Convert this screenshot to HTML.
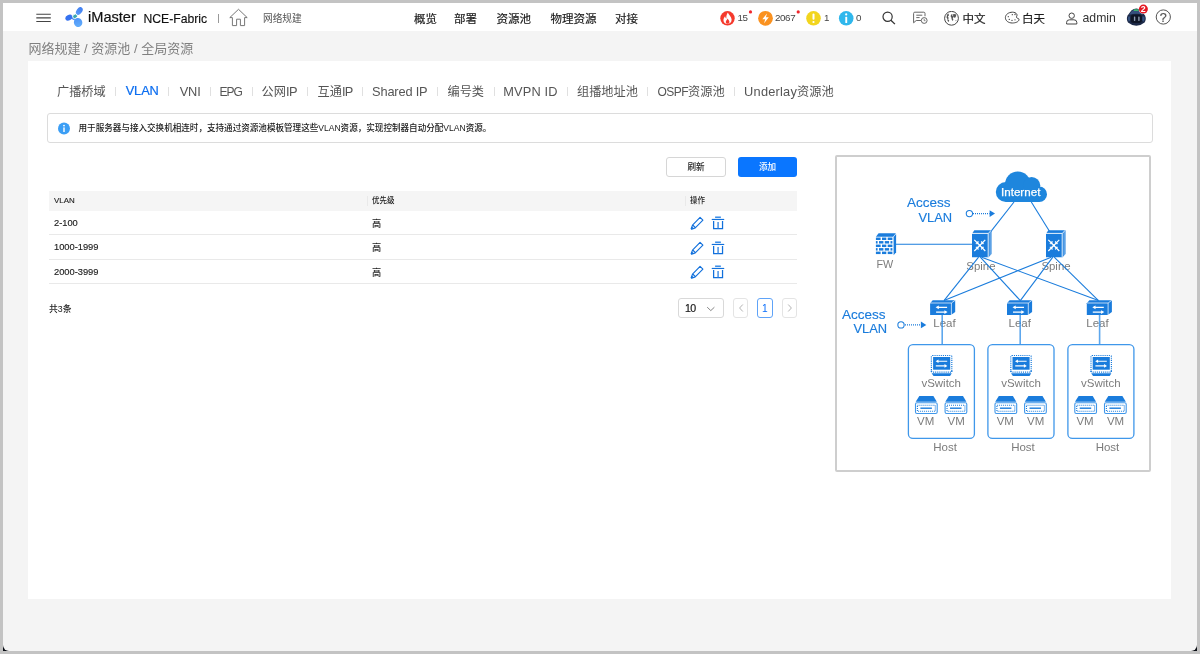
<!DOCTYPE html>
<html lang="zh-CN">
<head>
<meta charset="utf-8">
<title>iMaster NCE-Fabric</title>
<style>
*{box-sizing:border-box;margin:0;padding:0}
html,body{width:1200px;height:654px;overflow:hidden;background:#c3c3c3}
body{will-change:transform;font-family:"Liberation Sans","Noto Sans CJK SC",sans-serif;color:#222;position:relative}
.abs{position:absolute;white-space:nowrap;line-height:1}
#cornerL,#cornerR{position:absolute;width:6px;height:6px;background:#0a0d14;top:645px}
#cornerL{left:3px}#cornerR{left:1191px}
#frame2{position:absolute;left:3px;top:3px;width:1194px;height:648px;background:#f4f4f4;border-radius:0 0 6px 6px}
#hdr{position:absolute;left:3px;top:3px;width:1194px;height:28px;background:#fff}
#panel{position:absolute;left:28px;top:61px;width:1143px;height:538px;background:#fff}
.nav{font-size:11.5px;color:#1c1c1c;top:13.8px;-webkit-text-stroke:.18px #1c1c1c}
.tab{font-size:12.2px;color:#555;top:86px}
.tab .l{font-size:12.8px}
.sep{position:absolute;width:1px;background:#e0e0e0;top:86.5px;height:9.5px}
.cnt{font-size:9.8px;color:#444;top:13.1px;letter-spacing:-.4px}
</style>
</head>
<body>
<div id="cornerL"></div><div id="cornerR"></div>
<div id="frame2"></div>
<div id="hdr"></div>
<!-- hamburger -->
<svg class="abs" style="left:36px;top:13px" width="16" height="10" viewBox="0 0 16 10"><path d="M0.3 1.3H14.8M0.3 4.9H14.8M0.3 8.5H14.8" stroke="#444" stroke-width="1.1" fill="none"/></svg>
<!-- logo -->
<svg class="abs" style="left:65px;top:7px" width="19" height="20" viewBox="0 0 19 20">
<defs><linearGradient id="lg1" x1="0" y1="0" x2="0" y2="1"><stop offset="0" stop-color="#3f7df2"/><stop offset="1" stop-color="#5a9cf8"/></linearGradient>
<linearGradient id="lg2" x1="0" y1="0" x2="0" y2="1"><stop offset="0" stop-color="#4d94f7"/><stop offset="1" stop-color="#63aefb"/></linearGradient></defs>
<path d="M5.5 9.3L8 8.8L9.2 11.6L12 11.4L11 14L7.5 12.4Z" fill="#4a8df6"/>
<ellipse cx="14.3" cy="4" rx="2.8" ry="4.3" transform="rotate(35 14.3 4)" fill="url(#lg1)"/>
<ellipse cx="3.9" cy="10.7" rx="2.7" ry="3.7" transform="rotate(62 3.9 10.7)" fill="#3672f0"/>
<ellipse cx="13.1" cy="15.5" rx="4.2" ry="4.6" transform="rotate(-12 13.1 15.5)" fill="url(#lg2)"/>
<ellipse cx="10" cy="9.3" rx="2.5" ry="2.1" transform="rotate(-35 10 9.3)" fill="#3aa7b0" stroke="#fff" stroke-width="0.8"/>
</svg>
<div class="abs" style="left:88px;top:10.4px;font-size:14.6px;color:#111;-webkit-text-stroke:.2px #111">iMaster</div>
<div class="abs" style="left:143.5px;top:12.5px;font-size:12.2px;color:#111;-webkit-text-stroke:.15px #111">NCE-Fabric</div>
<div class="abs" style="left:218px;top:14px;width:1px;height:9px;background:#999"></div>
<!-- home -->
<svg class="abs" style="left:229px;top:8px" width="19" height="19" viewBox="0 0 19 19"><path d="M0.8 9.6L9.5 1.3L18.2 9.6H15.6V17.6H11.4V11.2H7.6V17.6H3.4V9.6Z" fill="none" stroke="#777" stroke-width="1" stroke-linejoin="round"/></svg>
<div class="abs" style="left:263px;top:13.6px;font-size:9.7px;color:#555">网络规建</div>
<div class="abs nav" style="left:414px">概览</div>
<div class="abs nav" style="left:454px">部署</div>
<div class="abs nav" style="left:496.5px">资源池</div>
<div class="abs nav" style="left:550.5px">物理资源</div>
<div class="abs nav" style="left:615px">对接</div>
<!-- alarms -->
<svg class="abs" style="left:720px;top:8px" width="142" height="20" viewBox="720 8 142 20">
<circle cx="727.5" cy="18.3" r="7.2" fill="#f5392c"/>
<g transform="translate(727.6 18.6) scale(1.22) translate(-727.6 -18.3)"><path d="M727.9 13.2c.6 2.2 3 3.200 3 6.100c0 2-1.500 3.400-3.300 3.400c-1.900 0-3.400-1.300-3.400-3.300c0-1.300.7-2.300 1.400-3.100c.1 1 .5 1.600 1 1.900c-.2-1.800.2-3.600 1.300-5z" fill="#fff"/>
<path d="M727.7 18.200c.5 1.100 1.400 1.700 1.400 2.900c0 .9-.7 1.500-1.500 1.500c-.9 0-1.500-.6-1.500-1.500c0-1 1-1.700 1.600-2.900z" fill="#f5392c"/></g>
<circle cx="750.5" cy="11.9" r="1.6" fill="#f0262d"/>
<circle cx="765.5" cy="18.300" r="7.400" fill="#fa9220"/>
<path d="M767 13.400L762.300 19.300H765.200L764.100 23.300L768.800 17.300H765.900Z" fill="#fff"/>
<circle cx="798.2" cy="11.9" r="1.6" fill="#f0262d"/>
<circle cx="813.500" cy="18.300" r="7.300" fill="#f2d51e"/>
<rect x="812.500" y="13.600" width="2" height="6.200" rx="1" fill="#fff"/><circle cx="813.500" cy="22" r="1.100" fill="#fff"/>
<circle cx="846.200" cy="18.300" r="7.300" fill="#2fb7ec"/>
<rect x="845.300" y="16.800" width="1.900" height="6.200" rx=".6" fill="#fff"/><circle cx="846.200" cy="14.400" r="1.100" fill="#fff"/>
</svg>
<div class="abs cnt" style="left:737.5px">15</div>
<div class="abs cnt" style="left:775px">2067</div>
<div class="abs cnt" style="left:824px">1</div>
<div class="abs cnt" style="left:856px">0</div>
<!-- search -->
<svg class="abs" style="left:881px;top:11px" width="16" height="15" viewBox="0 0 16 15"><circle cx="6.600" cy="5.700" r="4.600" fill="none" stroke="#333" stroke-width="1.200"/><path d="M9.900 9.200L13.900 13.100" stroke="#333" stroke-width="1.300" fill="none"/></svg>
<!-- message -->
<svg class="abs" style="left:912px;top:11px" width="17" height="14" viewBox="0 0 17 14"><path d="M9 9.500H4.200L1.600 11.800V2.400Q1.600 1.200 2.800 1.200H11.800Q13 1.200 13 2.400V5.200" fill="none" stroke="#666" stroke-width="1"/><path d="M4.300 4.200H10.300M4.300 6.600H7.600" stroke="#666" stroke-width="1" fill="none"/><circle cx="12.200" cy="9.500" r="2.900" fill="#fff" stroke="#666" stroke-width="1"/><path d="M12.200 7.900V9.700H13.500" stroke="#666" stroke-width=".8" fill="none"/></svg>
<!-- globe -->
<svg class="abs" style="left:944px;top:10.500px" width="16" height="16" viewBox="0 0 16 16"><circle cx="7.500" cy="7.300" r="6.900" fill="none" stroke="#444" stroke-width="1"/><path d="M3.100 3.400L4.600 2.600L4.900 4.400L3.900 5.600L4.700 7L4.100 8.200L5.200 9.600L4.700 11.100L3.600 10L3.400 8L2.500 6.400Z M7.100 3.600L8.600 3.200L8.300 4.800L9.300 5.800L8.800 7.400L9.400 8.800L8.600 10L7.700 8.400L7.300 6.600L6.600 5.200Z M9 3.300L11.400 3.100L12.300 4.600L11.400 6.600L10 6.800L9.200 5.400Z M11.600 9.300L12.500 9.400L12.200 10.300L11.500 10.100Z" fill="#555"/></svg>
<div class="abs nav" style="left:962.500px;top:14.2px">中文</div>
<!-- palette -->
<svg class="abs" style="left:1004px;top:11px" width="17" height="14" viewBox="0 0 17 14"><path d="M8.500 1.200C4.500 1.200 1.400 3.600 1.400 6.600C1.400 9.800 4.500 12 8.300 12C11.500 12 14.800 10.800 15 8.600C15.100 7.200 13.200 7.600 12.600 6.600C12 5.600 13.600 4.600 12.800 3.200C12 1.800 10.200 1.200 8.500 1.200Z" fill="none" stroke="#444" stroke-width="1"/><g fill="#444"><circle cx="4.300" cy="5.700" r=".65"/><circle cx="5.300" cy="8.400" r=".65"/><circle cx="8.300" cy="3.700" r=".65"/><circle cx="11" cy="3.500" r=".65"/><circle cx="8" cy="9.400" r=".65"/><circle cx="11" cy="8.800" r=".65"/></g></svg>
<div class="abs nav" style="left:1022px;top:14.2px">白天</div>
<!-- user -->
<svg class="abs" style="left:1065px;top:11.500px" width="14" height="13" viewBox="0 0 14 13"><circle cx="6.700" cy="3.700" r="2.700" fill="none" stroke="#444" stroke-width="1"/><path d="M1.600 12V10.400Q1.600 7.800 4.500 7.800H8.900Q11.800 7.800 11.800 10.400V12Z" fill="none" stroke="#444" stroke-width="1"/></svg>
<div class="abs" style="left:1082.500px;top:12px;font-size:12.25px;color:#333">admin</div>
<!-- robot -->
<svg class="abs" style="left:1124px;top:3px" width="26" height="25" viewBox="1124 3 26 25">
<path d="M1131.600 10.300Q1136.300 6.900 1141 10.300L1145 15.600Q1146.700 19.200 1144.600 22.600Q1141 25.700 1136.300 25.700Q1131.600 25.700 1128 22.600Q1125.900 19.200 1127.600 15.600Z" fill="#1c2947"/>
<path d="M1132 10.800Q1136.300 8 1140.600 10.800L1143.600 14.800Q1136.300 12.600 1129 14.800Z" fill="#35507e"/>
<path d="M1128.200 16.500Q1127.200 19.300 1128.800 21.800L1130.300 20.500V16.500ZM1144.400 16.500Q1145.400 19.300 1143.800 21.800L1142.300 20.500V16.500Z" fill="#34507e"/>
<rect x="1130.600" y="14.600" width="11.400" height="8.400" rx="3.200" fill="#0e1526"/>
<rect x="1133.900" y="16.600" width="1.400" height="4.300" rx=".4" fill="#8e9bb0"/><rect x="1138.200" y="16.600" width="1.400" height="4.300" rx=".4" fill="#8e9bb0"/>
<rect x="1133.700" y="9.200" width="4.800" height="1.900" rx=".9" fill="#3db56f"/>
<circle cx="1143.300" cy="9.100" r="4.700" fill="#fff"/>
<circle cx="1143.400" cy="9.100" r="4.500" fill="#e51823"/>
</svg>
<div class="abs" style="left:1140.800px;top:4.500px;font-size:8.800px;color:#fff;font-weight:bold">2</div>
<!-- help -->
<svg class="abs" style="left:1155px;top:9px" width="17" height="17" viewBox="0 0 17 17"><circle cx="8.300" cy="8" r="7.100" fill="none" stroke="#555" stroke-width="1"/></svg>
<div class="abs" style="left:1159.800px;top:11.600px;font-size:12.500px;color:#555;-webkit-text-stroke:.2px #555">?</div>
<div class="abs" style="left:28.5px;top:42.4px;font-size:13px;color:#808080">网络规建 / 资源池 / 全局资源</div>
<div id="panel"></div>
<!--TABS-START-->
<div class="abs tab" style="left:57.00px">广播桥域</div>
<div class="abs tab" style="left:125.70px;top:84.8px;color:#0a6df0;-webkit-text-stroke:.2px #0a6df0"><span class="l" style="letter-spacing:-0.10px">VLAN</span></div>
<div class="abs tab" style="left:179.70px"><span class="l" style="letter-spacing:-0.10px">VNI</span></div>
<div class="abs tab" style="left:219.60px"><span class="l" style="letter-spacing:-1.05px;font-size:12.0px">EPG</span></div>
<div class="abs tab" style="left:261.60px">公网<span class="l" style="letter-spacing:-0.60px">IP</span></div>
<div class="abs tab" style="left:317.60px">互通<span class="l" style="letter-spacing:-0.78px">IP</span></div>
<div class="abs tab" style="left:372.10px"><span class="l" style="letter-spacing:-0.17px">Shared IP</span></div>
<div class="abs tab" style="left:447.50px">编号类</div>
<div class="abs tab" style="left:503.30px"><span class="l" style="letter-spacing:0.13px">MVPN ID</span></div>
<div class="abs tab" style="left:577.00px">组播地址池</div>
<div class="abs tab" style="left:657.50px"><span class="l" style="letter-spacing:-0.52px;font-size:12.0px">OSPF</span>资源池</div>
<div class="abs tab" style="left:744.10px"><span class="l" style="letter-spacing:0.22px">Underlay</span>资源池</div>
<div class="sep" style="left:115px"></div>
<div class="sep" style="left:168.2px"></div>
<div class="sep" style="left:209.5px"></div>
<div class="sep" style="left:252px"></div>
<div class="sep" style="left:307px"></div>
<div class="sep" style="left:362px"></div>
<div class="sep" style="left:437px"></div>
<div class="sep" style="left:493.5px"></div>
<div class="sep" style="left:566.7px"></div>
<div class="sep" style="left:647px"></div>
<div class="sep" style="left:734.2px"></div>
<!--TABS-END-->

<div class="abs" style="left:47px;top:113px;width:1106px;height:30px;border:1px solid #dcdcdc;border-radius:3px;background:#fff"></div>
<svg class="abs" style="left:57px;top:122px" width="14" height="14" viewBox="0 0 14 14"><circle cx="7" cy="6.500" r="6" fill="#3b9ef5"/><rect x="6.300" y="5.400" width="1.400" height="4.600" fill="#fff"/><circle cx="7" cy="3.600" r=".9" fill="#fff"/></svg>
<div class="abs" style="left:78.500px;top:124px;font-size:8.57px;color:#1a1a1a;font-weight:500">用于服务器与接入交换机相连时，支持通过资源池模板管理这些VLAN资源，实现控制器自动分配VLAN资源。</div>
<div class="abs" style="left:666px;top:157px;width:60px;height:20px;border:1px solid #d6d6d6;border-radius:3px;background:#fff"></div>
<div class="abs" style="left:687.500px;top:163.2px;font-size:8.6px;color:#222;font-weight:500">刷新</div>
<div class="abs" style="left:738px;top:157px;width:59px;height:20px;border-radius:3px;background:#0a76ff"></div>
<div class="abs" style="left:759px;top:163.2px;font-size:8.6px;color:#fff;font-weight:500">添加</div>
<div class="abs" style="left:49px;top:191px;width:748px;height:20px;background:#f5f5f5"></div>
<div class="abs" style="left:367px;top:196px;width:1px;height:10px;background:#e9e9e9"></div>
<div class="abs" style="left:685px;top:196px;width:1px;height:10px;background:#e9e9e9"></div>
<div class="abs" style="left:54px;top:197.2px;font-size:7.9px;color:#222;-webkit-text-stroke:.12px #222">VLAN</div>
<div class="abs" style="left:372px;top:197.3px;font-size:7.5px;color:#222;font-weight:500">优先级</div>
<div class="abs" style="left:690px;top:197.3px;font-size:7.5px;color:#222;font-weight:500">操作</div>
<div class="abs" style="left:49px;top:234.0px;width:748px;height:1px;background:#e9e9e9"></div>
<div class="abs" style="left:54px;top:218.75px;font-size:9.3px;color:#222;-webkit-text-stroke:.15px #222">2-100</div>
<div class="abs" style="left:372px;top:219.75px;font-size:9.2px;color:#222;font-weight:500">高</div>
<svg class="abs" style="left:689.8px;top:216.15px" width="14.7" height="14.7" viewBox="0 0 14 14"><path d="M9.600 1.300L12.300 4L5 11.300L1.600 12.600L1.100 12.100L2.400 8.700Z M2.600 8.600L5.100 11.100" fill="none" stroke="#1170dc" stroke-width="1.100" stroke-linejoin="round"/><path d="M1.100 12.600L1.900 10L3.700 11.800Z" fill="#1170dc"/></svg>
<svg class="abs" style="left:710.8px;top:216.15px" width="14.7" height="14.7" viewBox="0 0 14 14"><path d="M0.700 3.300H12.600" stroke="#1170dc" stroke-width="1.100" fill="none"/><path d="M3.900 1.200H9.400" stroke="#3d8ee6" stroke-width="1.500" fill="none"/><path d="M2.500 4.800V12H11V4.800" stroke="#1170dc" stroke-width="1.200" fill="none"/><path d="M6.750 5.800V12" stroke="#3585e2" stroke-width="1.300" fill="none"/></svg>
<div class="abs" style="left:49px;top:258.5px;width:748px;height:1px;background:#e9e9e9"></div>
<div class="abs" style="left:54px;top:243.25px;font-size:9.3px;color:#222;-webkit-text-stroke:.15px #222">1000-1999</div>
<div class="abs" style="left:372px;top:244.25px;font-size:9.2px;color:#222;font-weight:500">高</div>
<svg class="abs" style="left:689.8px;top:240.65px" width="14.7" height="14.7" viewBox="0 0 14 14"><path d="M9.600 1.300L12.300 4L5 11.300L1.600 12.600L1.100 12.100L2.400 8.700Z M2.600 8.600L5.100 11.100" fill="none" stroke="#1170dc" stroke-width="1.100" stroke-linejoin="round"/><path d="M1.100 12.600L1.900 10L3.700 11.800Z" fill="#1170dc"/></svg>
<svg class="abs" style="left:710.8px;top:240.65px" width="14.7" height="14.7" viewBox="0 0 14 14"><path d="M0.700 3.300H12.600" stroke="#1170dc" stroke-width="1.100" fill="none"/><path d="M3.900 1.200H9.400" stroke="#3d8ee6" stroke-width="1.500" fill="none"/><path d="M2.500 4.800V12H11V4.800" stroke="#1170dc" stroke-width="1.200" fill="none"/><path d="M6.750 5.800V12" stroke="#3585e2" stroke-width="1.300" fill="none"/></svg>
<div class="abs" style="left:49px;top:283.0px;width:748px;height:1px;background:#e9e9e9"></div>
<div class="abs" style="left:54px;top:267.75px;font-size:9.3px;color:#222;-webkit-text-stroke:.15px #222">2000-3999</div>
<div class="abs" style="left:372px;top:268.75px;font-size:9.2px;color:#222;font-weight:500">高</div>
<svg class="abs" style="left:689.8px;top:265.15px" width="14.7" height="14.7" viewBox="0 0 14 14"><path d="M9.600 1.300L12.300 4L5 11.300L1.600 12.600L1.100 12.100L2.400 8.700Z M2.600 8.600L5.100 11.100" fill="none" stroke="#1170dc" stroke-width="1.100" stroke-linejoin="round"/><path d="M1.100 12.600L1.900 10L3.700 11.800Z" fill="#1170dc"/></svg>
<svg class="abs" style="left:710.8px;top:265.15px" width="14.7" height="14.7" viewBox="0 0 14 14"><path d="M0.700 3.300H12.600" stroke="#1170dc" stroke-width="1.100" fill="none"/><path d="M3.900 1.200H9.400" stroke="#3d8ee6" stroke-width="1.500" fill="none"/><path d="M2.500 4.800V12H11V4.800" stroke="#1170dc" stroke-width="1.200" fill="none"/><path d="M6.750 5.800V12" stroke="#3585e2" stroke-width="1.300" fill="none"/></svg>
<div class="abs" style="left:49px;top:304.6px;font-size:8.8px;color:#222;font-weight:500">共3条</div>
<div class="abs" style="left:678px;top:298px;width:46px;height:20px;border:1px solid #d9d9d9;border-radius:3px;background:#fff"></div>
<div class="abs" style="left:685px;top:303.2px;font-size:10.6px;color:#1a1a1a;letter-spacing:-.7px;-webkit-text-stroke:.2px #1a1a1a">10</div>
<svg class="abs" style="left:705.5px;top:305px" width="10" height="8" viewBox="0 0 10 8"><path d="M1.200 2.200L4.800 5.600L8.400 2.200" fill="none" stroke="#777" stroke-width=".9"/></svg>
<div class="abs" style="left:733px;top:298px;width:15px;height:20px;border:1px solid #e4e4e4;border-radius:3px;background:#fff"></div>
<svg class="abs" style="left:736.5px;top:303.4px" width="9" height="10" viewBox="0 0 9 10"><path d="M5.800 1.500L2.600 5L5.800 8.500" fill="none" stroke="#aaa" stroke-width=".9"/></svg>
<div class="abs" style="left:757px;top:298px;width:16px;height:20px;border:1px solid #5fa3f8;border-radius:3px;background:#fff"></div>
<div class="abs" style="left:762.1px;top:303.7px;font-size:10.2px;color:#0b6ffb">1</div>
<div class="abs" style="left:782px;top:298px;width:15px;height:20px;border:1px solid #e4e4e4;border-radius:3px;background:#fff"></div>
<svg class="abs" style="left:785px;top:303.4px" width="9" height="10" viewBox="0 0 9 10"><path d="M3.200 1.500L6.400 5L3.200 8.500" fill="none" stroke="#aaa" stroke-width=".9"/></svg>

<!--DIAG-START-->
<div class="abs" style="left:835px;top:155px;width:316px;height:317px;border:2px solid #cecece;border-radius:2px;background:#fff"></div>
<svg class="abs" style="left:837px;top:157px" width="312" height="313" viewBox="837 157 312 313" font-family="'Liberation Sans',sans-serif">
<text x="980.9" y="270" font-size="11.4" fill="#7c7c7c" text-anchor="middle">Spine</text>
<text x="1056" y="270" font-size="11.4" fill="#7c7c7c" text-anchor="middle">Spine</text>
<text x="944.5" y="327.1" font-size="11.5" fill="#7c7c7c" text-anchor="middle">Leaf</text>
<text x="1019.7" y="327.1" font-size="11.5" fill="#7c7c7c" text-anchor="middle">Leaf</text>
<text x="1097.5" y="327.1" font-size="11.5" fill="#7c7c7c" text-anchor="middle">Leaf</text>
<g stroke="#1a7cdc" stroke-width="1.1" fill="none">
<path d="M1014 202L990 232.7"/>
<path d="M1031.3 202L1049.3 231"/>
<path d="M895.5 244.2L972 244.2"/>
<path d="M978.6 257.2L944 300.6"/>
<path d="M980.3 257.2L1020.3 300.6"/>
<path d="M981.6 257.2L1098.5 300.6"/>
<path d="M1051.2 257.2L944 300.6"/>
<path d="M1052.8 257.2L1020.3 300.6"/>
<path d="M1054.2 257.2L1098.5 300.6"/>
</g>
<g stroke="#2f8ee8" stroke-opacity=".78" stroke-width="1.6" fill="none">
<path d="M942.2 315V344"/>
<path d="M1020.2 315V344"/>
<path d="M1099.6 315V344"/>
</g>
<rect x="908.4" y="344.6" width="66" height="93.8" rx="4.5" fill="#fff" stroke="#3f97ea" stroke-width="1.3"/>
<rect x="987.9" y="344.6" width="66.1" height="93.8" rx="4.5" fill="#fff" stroke="#3f97ea" stroke-width="1.3"/>
<rect x="1067.9" y="344.6" width="66" height="93.8" rx="4.5" fill="#fff" stroke="#3f97ea" stroke-width="1.3"/>
<g fill="#1e86dd"><circle cx="1005.8" cy="192" r="10"/><circle cx="1039.2" cy="194.2" r="7.8"/><rect x="1005.8" y="186" width="33.4" height="16"/><circle cx="1017.8" cy="184.2" r="12.8"/><circle cx="1031.6" cy="185.6" r="8.7"/></g>
<text x="1020.7" y="195.8" font-size="11.6" fill="#fff" text-anchor="middle" stroke="#fff" stroke-width=".25">Internet</text>
<text x="950.6" y="206.8" font-size="13.5" fill="#1a7cdc" stroke="#1a7cdc" stroke-width=".15" text-anchor="end">Access</text>
<text x="952.2" y="221.8" font-size="12.9" fill="#1a7cdc" stroke="#1a7cdc" stroke-width=".15" text-anchor="end">VLAN</text>
<text x="885.6" y="318.6" font-size="13.5" fill="#1a7cdc" stroke="#1a7cdc" stroke-width=".15" text-anchor="end">Access</text>
<text x="887.2" y="333.3" font-size="12.9" fill="#1a7cdc" stroke="#1a7cdc" stroke-width=".15" text-anchor="end">VLAN</text>
<circle cx="969.4" cy="213.6" r="3.15" fill="#fff" stroke="#1a7cdc" stroke-width="1.05"/>
<path d="M973 213.6H989.6" stroke="#1a7cdc" stroke-width="1.3" stroke-dasharray="1 1" fill="none"/>
<path d="M989.6 210.3L995 213.6L989.6 216.9Z" fill="#1a7cdc"/>
<circle cx="901" cy="324.9" r="3.15" fill="#fff" stroke="#1a7cdc" stroke-width="1.05"/>
<path d="M905 324.9H920.9" stroke="#1a7cdc" stroke-width="1.3" stroke-dasharray="1 1" fill="none"/>
<path d="M920.9 321.6L926.3 324.9L920.9 328.2Z" fill="#1a7cdc"/>
<g transform="translate(875.7 233.4)" fill="#1a7cdc"><path d="M.2 3.300L2.900 -.2H20.200L17.400 3.300Z"/><path d="M17.900 3.700L20.400 .7V18.900L17.900 21.800Z"/><rect x="0.2" y="4.15" width="4.7" height="2.450"/><rect x="6.3" y="4.15" width="4.3" height="2.450"/><rect x="12" y="4.15" width="4.7" height="2.450"/><rect x="0.2" y="7.67" width="1.7" height="2.450"/><rect x="3.3" y="7.67" width="4.4" height="2.450"/><rect x="9.1" y="7.67" width="4.3" height="2.450"/><rect x="14.8" y="7.67" width="1.9" height="2.450"/><rect x="0.2" y="11.19" width="4.7" height="2.450"/><rect x="6.3" y="11.19" width="4.3" height="2.450"/><rect x="12" y="11.19" width="4.7" height="2.450"/><rect x="0.2" y="14.71" width="1.7" height="2.450"/><rect x="3.3" y="14.71" width="4.4" height="2.450"/><rect x="9.1" y="14.71" width="4.3" height="2.450"/><rect x="14.8" y="14.71" width="1.9" height="2.450"/><rect x="0.2" y="18.23" width="4.7" height="2.450"/><rect x="6.3" y="18.23" width="4.3" height="2.450"/><rect x="12" y="18.23" width="4.7" height="2.450"/></g>
<g transform="translate(972 233.7)"><path d="M0 0L2.3 -3.4H19.5V20.3L16.6 23.5H0Z" fill="#1a7cdc"/><path d="M0 -.3H16.2V23.5M16.2 -.3L19.3 -3.4" stroke="#fff" stroke-width=".9" fill="none"/><path d="M18.1 -1.900V22" stroke="#fff" stroke-width=".5" fill="none"/><path d="M2.300 6.200L13.300 17.300M13.300 6.200L2.300 17.300" stroke="#fff" stroke-width="1.200" fill="none"/><path d="M6.200 7.400V10.100H3.800ZM9.400 7.400V10.100H11.800ZM6.200 16V13.300H3.800ZM9.400 16V13.300H11.800Z" fill="#fff" stroke="#fff" stroke-width=".5"/><circle cx="7.800" cy="11.700" r="1.100" fill="#fff"/></g>
<g transform="translate(1046 233.7)"><path d="M0 0L2.3 -3.4H19.5V20.3L16.6 23.5H0Z" fill="#1a7cdc"/><path d="M0 -.3H16.2V23.5M16.2 -.3L19.3 -3.4" stroke="#fff" stroke-width=".9" fill="none"/><path d="M18.1 -1.900V22" stroke="#fff" stroke-width=".5" fill="none"/><path d="M2.300 6.200L13.300 17.300M13.300 6.200L2.300 17.300" stroke="#fff" stroke-width="1.200" fill="none"/><path d="M6.200 7.400V10.100H3.800ZM9.400 7.400V10.100H11.800ZM6.200 16V13.300H3.800ZM9.400 16V13.300H11.800Z" fill="#fff" stroke="#fff" stroke-width=".5"/><circle cx="7.800" cy="11.700" r="1.100" fill="#fff"/></g>
<g transform="translate(930.1 303.2)"><path d="M0 0L2.600 -2.900H25.100V8.800L20.900 11.900H0Z" fill="#1a7cdc"/><path d="M0 -.2H21.300V11.900M21.300 -.2L25 -2.900" stroke="#fff" stroke-width=".7" fill="none"/><path d="M7.500 4.100H17M6 8.900H15.500" stroke="#fff" stroke-width="1.350" fill="none"/><path d="M5.500 4.100L8.700 2.200V6ZM17.500 8.900L14.300 7V10.800Z" fill="#fff"/></g>
<g transform="translate(1007 303.2)"><path d="M0 0L2.600 -2.900H25.100V8.800L20.900 11.900H0Z" fill="#1a7cdc"/><path d="M0 -.2H21.300V11.900M21.300 -.2L25 -2.900" stroke="#fff" stroke-width=".7" fill="none"/><path d="M7.500 4.100H17M6 8.900H15.500" stroke="#fff" stroke-width="1.350" fill="none"/><path d="M5.500 4.100L8.700 2.200V6ZM17.500 8.900L14.300 7V10.800Z" fill="#fff"/></g>
<g transform="translate(1086.8 303.2)"><path d="M0 0L2.600 -2.900H25.100V8.800L20.900 11.900H0Z" fill="#1a7cdc"/><path d="M0 -.2H21.300V11.900M21.300 -.2L25 -2.900" stroke="#fff" stroke-width=".7" fill="none"/><path d="M7.500 4.100H17M6 8.900H15.500" stroke="#fff" stroke-width="1.350" fill="none"/><path d="M5.500 4.100L8.700 2.200V6ZM17.500 8.900L14.300 7V10.800Z" fill="#fff"/></g>
<g transform="translate(930.8 354.9)"><rect x=".6" y=".6" width="20.400" height="16.600" rx="1" fill="#fff" stroke="#1a7cdc" stroke-width="1.200" stroke-dasharray="1.100 1"/><rect x="2.300" y="2.100" width="17.100" height="12.700" fill="#1a7cdc"/><path d="M6.700 6.300H16.400M5 11H14.700" stroke="#fff" stroke-width="1.100" fill="none"/><path d="M4.800 6.300L7.700 4.500V8.100ZM16.600 11L13.700 9.200V12.800Z" fill="#fff"/><path d="M.8 18.300H21L19.300 21H2.700Z" fill="#1a7cdc"/><path d="M0 16.300H1.300M20.300 16.300H21.600" stroke="#1a7cdc" stroke-width="1.400" fill="none"/></g>
<g transform="translate(1010.2 354.9)"><rect x=".6" y=".6" width="20.400" height="16.600" rx="1" fill="#fff" stroke="#1a7cdc" stroke-width="1.200" stroke-dasharray="1.100 1"/><rect x="2.300" y="2.100" width="17.100" height="12.700" fill="#1a7cdc"/><path d="M6.700 6.300H16.400M5 11H14.700" stroke="#fff" stroke-width="1.100" fill="none"/><path d="M4.800 6.300L7.700 4.500V8.100ZM16.600 11L13.700 9.200V12.800Z" fill="#fff"/><path d="M.8 18.300H21L19.300 21H2.700Z" fill="#1a7cdc"/><path d="M0 16.300H1.300M20.300 16.300H21.600" stroke="#1a7cdc" stroke-width="1.400" fill="none"/></g>
<g transform="translate(1090.4 354.9)"><rect x=".6" y=".6" width="20.400" height="16.600" rx="1" fill="#fff" stroke="#1a7cdc" stroke-width="1.200" stroke-dasharray="1.100 1"/><rect x="2.300" y="2.100" width="17.100" height="12.700" fill="#1a7cdc"/><path d="M6.700 6.300H16.400M5 11H14.700" stroke="#fff" stroke-width="1.100" fill="none"/><path d="M4.800 6.300L7.700 4.500V8.100ZM16.600 11L13.700 9.200V12.800Z" fill="#fff"/><path d="M.8 18.300H21L19.300 21H2.700Z" fill="#1a7cdc"/><path d="M0 16.300H1.300M20.300 16.300H21.600" stroke="#1a7cdc" stroke-width="1.400" fill="none"/></g>
<g transform="translate(915 395.9)"><path d="M4.300 0H18.400L21.800 5.900H.7Z" fill="#1a7cdc"/><rect x=".5" y="6.900" width="21.700" height="10.700" rx="1.500" fill="#fff" stroke="#3f97ea" stroke-width="1.100"/><rect x="2.400" y="9.400" width="17.900" height="5.900" fill="none" stroke="#1a7cdc" stroke-width="1.100" stroke-dasharray="1 1"/><path d="M5.400 12.300H16.900" stroke="#1a7cdc" stroke-width="1.400" fill="none"/></g>
<g transform="translate(944.6 395.9)"><path d="M4.300 0H18.400L21.800 5.900H.7Z" fill="#1a7cdc"/><rect x=".5" y="6.900" width="21.700" height="10.700" rx="1.500" fill="#fff" stroke="#3f97ea" stroke-width="1.100"/><rect x="2.400" y="9.400" width="17.900" height="5.900" fill="none" stroke="#1a7cdc" stroke-width="1.100" stroke-dasharray="1 1"/><path d="M5.400 12.300H16.900" stroke="#1a7cdc" stroke-width="1.400" fill="none"/></g>
<g transform="translate(994.5 395.9)"><path d="M4.300 0H18.400L21.800 5.900H.7Z" fill="#1a7cdc"/><rect x=".5" y="6.900" width="21.700" height="10.700" rx="1.500" fill="#fff" stroke="#3f97ea" stroke-width="1.100"/><rect x="2.400" y="9.400" width="17.900" height="5.900" fill="none" stroke="#1a7cdc" stroke-width="1.100" stroke-dasharray="1 1"/><path d="M5.400 12.300H16.900" stroke="#1a7cdc" stroke-width="1.400" fill="none"/></g>
<g transform="translate(1024.1 395.9)"><path d="M4.300 0H18.400L21.800 5.900H.7Z" fill="#1a7cdc"/><rect x=".5" y="6.900" width="21.700" height="10.700" rx="1.500" fill="#fff" stroke="#3f97ea" stroke-width="1.100"/><rect x="2.400" y="9.400" width="17.900" height="5.900" fill="none" stroke="#1a7cdc" stroke-width="1.100" stroke-dasharray="1 1"/><path d="M5.400 12.300H16.900" stroke="#1a7cdc" stroke-width="1.400" fill="none"/></g>
<g transform="translate(1074.3 395.9)"><path d="M4.300 0H18.400L21.800 5.900H.7Z" fill="#1a7cdc"/><rect x=".5" y="6.900" width="21.700" height="10.700" rx="1.500" fill="#fff" stroke="#3f97ea" stroke-width="1.100"/><rect x="2.400" y="9.400" width="17.900" height="5.900" fill="none" stroke="#1a7cdc" stroke-width="1.100" stroke-dasharray="1 1"/><path d="M5.400 12.300H16.900" stroke="#1a7cdc" stroke-width="1.400" fill="none"/></g>
<g transform="translate(1104 395.9)"><path d="M4.300 0H18.400L21.800 5.900H.7Z" fill="#1a7cdc"/><rect x=".5" y="6.900" width="21.700" height="10.700" rx="1.500" fill="#fff" stroke="#3f97ea" stroke-width="1.100"/><rect x="2.400" y="9.400" width="17.900" height="5.900" fill="none" stroke="#1a7cdc" stroke-width="1.100" stroke-dasharray="1 1"/><path d="M5.400 12.300H16.900" stroke="#1a7cdc" stroke-width="1.400" fill="none"/></g>
<text x="884.8" y="267.8" font-size="10.8" fill="#7c7c7c" text-anchor="middle">FW</text>
<text x="941.2" y="387.3" font-size="11.5" fill="#7c7c7c" text-anchor="middle">vSwitch</text>
<text x="1021" y="387.3" font-size="11.5" fill="#7c7c7c" text-anchor="middle">vSwitch</text>
<text x="1100.8" y="387.3" font-size="11.5" fill="#7c7c7c" text-anchor="middle">vSwitch</text>
<text x="925.7" y="425.3" font-size="11.5" fill="#7c7c7c" text-anchor="middle">VM</text>
<text x="956.2" y="425.3" font-size="11.5" fill="#7c7c7c" text-anchor="middle">VM</text>
<text x="1005.3" y="425.3" font-size="11.5" fill="#7c7c7c" text-anchor="middle">VM</text>
<text x="1035.7" y="425.3" font-size="11.5" fill="#7c7c7c" text-anchor="middle">VM</text>
<text x="1085" y="425.3" font-size="11.5" fill="#7c7c7c" text-anchor="middle">VM</text>
<text x="1115.5" y="425.3" font-size="11.5" fill="#7c7c7c" text-anchor="middle">VM</text>
<text x="945.1" y="450.6" font-size="11.5" fill="#7c7c7c" text-anchor="middle">Host</text>
<text x="1023" y="450.6" font-size="11.5" fill="#7c7c7c" text-anchor="middle">Host</text>
<text x="1107.5" y="450.6" font-size="11.5" fill="#7c7c7c" text-anchor="middle">Host</text>
</svg>
<!--DIAG-END-->
</body>
</html>
